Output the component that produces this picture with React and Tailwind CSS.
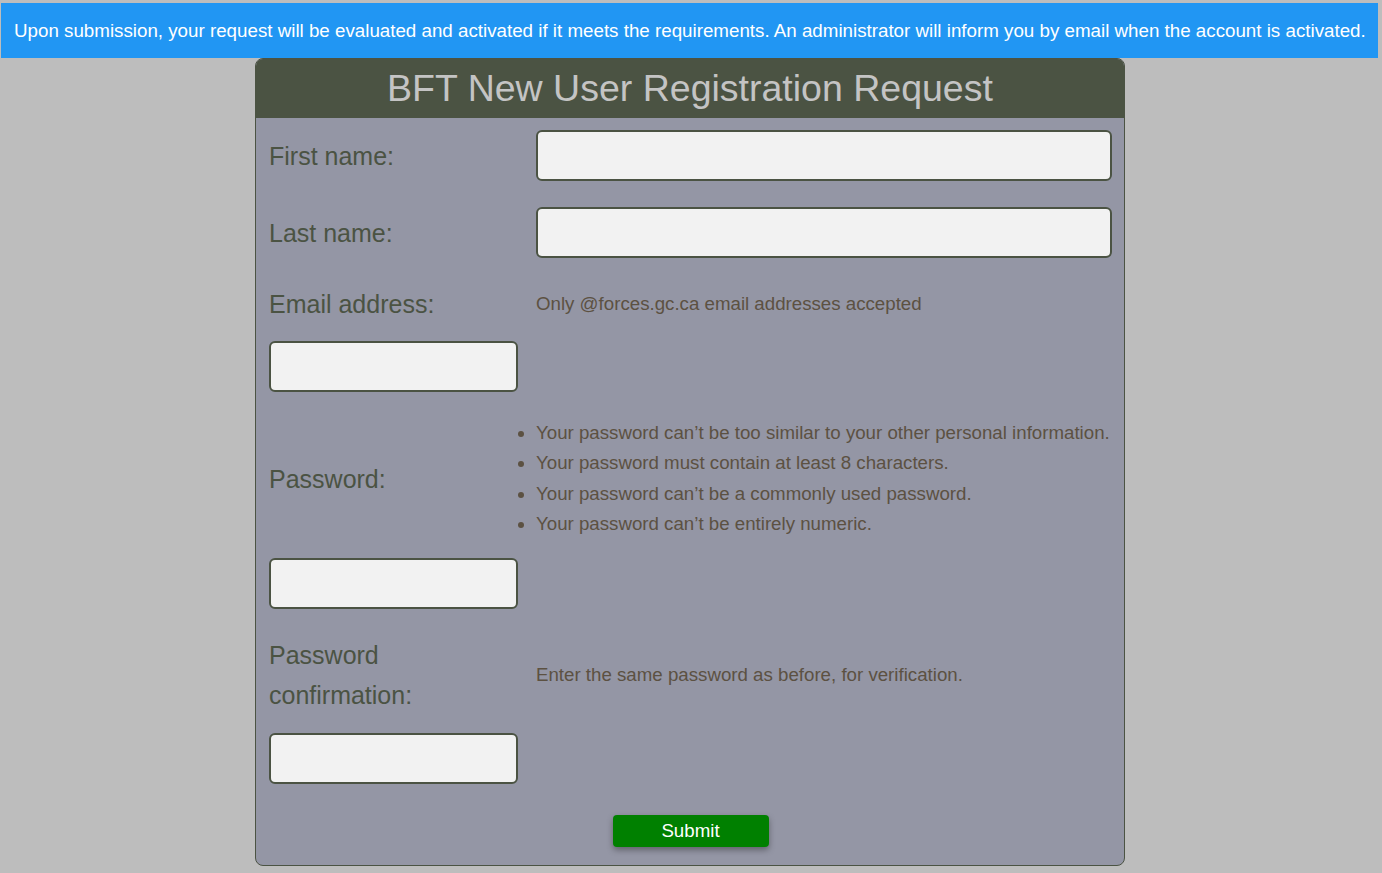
const labelCls = "text-[25px] text-[#4b5343] leading-[40px]";
const inputCls =
  "h-[51px] rounded-[6px] border-2 border-[#4b5343] bg-[#f2f2f2] px-3 text-[18px] outline-none";
const helpCls = "text-[18.7px] text-[#5c5142]";

const App = () => {
  return (
    <div
      className="min-h-screen bg-[#bdbdbd] pt-[3px]"
      style={{ fontFamily: '"Liberation Sans", Arial, sans-serif' }}
    >
      {/* Notice banner */}
      <div className="ml-[1px] mr-[4px] flex h-[55px] items-center bg-[#2196f3] px-[13px] pt-[2px] text-[18.75px] text-white whitespace-nowrap">
        Upon submission, your request will be evaluated and activated if it meets the requirements. An administrator will inform you by email when the account is activated.
      </div>

      {/* Card */}
      <div className="pr-[2px]">
        <div className="mx-auto w-[870px] overflow-hidden rounded-[8px] border border-[#4b5343] bg-[#9496a5]">
          <div className="flex h-[59px] items-center justify-center bg-[#4b5343] text-[37.5px] text-[#c4c4c4]">
            BFT New User Registration Request
          </div>

          <form className="pl-[13px] pr-[12px] pt-[12px] pb-[18px]">
            {/* First name */}
            <div className="flex items-center">
              <label className={`w-[267px] shrink-0 ${labelCls}`}>First name:</label>
              <input type="text" className={`flex-1 ${inputCls}`} />
            </div>

            {/* Last name */}
            <div className="mt-[26px] flex items-center">
              <label className={`w-[267px] shrink-0 ${labelCls}`}>Last name:</label>
              <input type="text" className={`flex-1 ${inputCls}`} />
            </div>

            {/* Email */}
            <div className="mt-[26px] flex items-center">
              <label className={`w-[267px] shrink-0 ${labelCls}`}>Email address:</label>
              <span className={helpCls}>Only @forces.gc.ca email addresses accepted</span>
            </div>
            <input type="email" className={`mt-[17px] block w-[249px] ${inputCls}`} />

            {/* Password */}
            <div className="mt-[26px] flex items-center">
              <label className={`w-[267px] shrink-0 ${labelCls}`}>Password:</label>
              <ul className={`list-disc list-outside leading-[30.3px] ${helpCls}`}>
                <li>Your password can’t be too similar to your other personal information.</li>
                <li>Your password must contain at least 8 characters.</li>
                <li>Your password can’t be a commonly used password.</li>
                <li>Your password can’t be entirely numeric.</li>
              </ul>
            </div>
            <input type="password" className={`mt-[19px] block w-[249px] h-[50px] ${inputCls}`} />

            {/* Password confirmation */}
            <div className="mt-[26px] flex items-center">
              <div className="w-[267px] shrink-0">
                <label className={`block w-[249px] ${labelCls}`}>Password confirmation:</label>
              </div>
              <span className={helpCls}>Enter the same password as before, for verification.</span>
            </div>
            <input type="password" className={`mt-[18px] block w-[249px] h-[49px] ${inputCls}`} />

            <div className="mt-[31px] flex justify-center">
              <button
                type="button"
                className="h-[32px] w-[156px] rounded-[4px] bg-[#008000] text-[18.7px] text-white shadow-[0_3px_6px_rgba(0,0,0,0.35)]"
              >
                Submit
              </button>
            </div>
          </form>
        </div>
      </div>
    </div>
  );
};

export default App;
